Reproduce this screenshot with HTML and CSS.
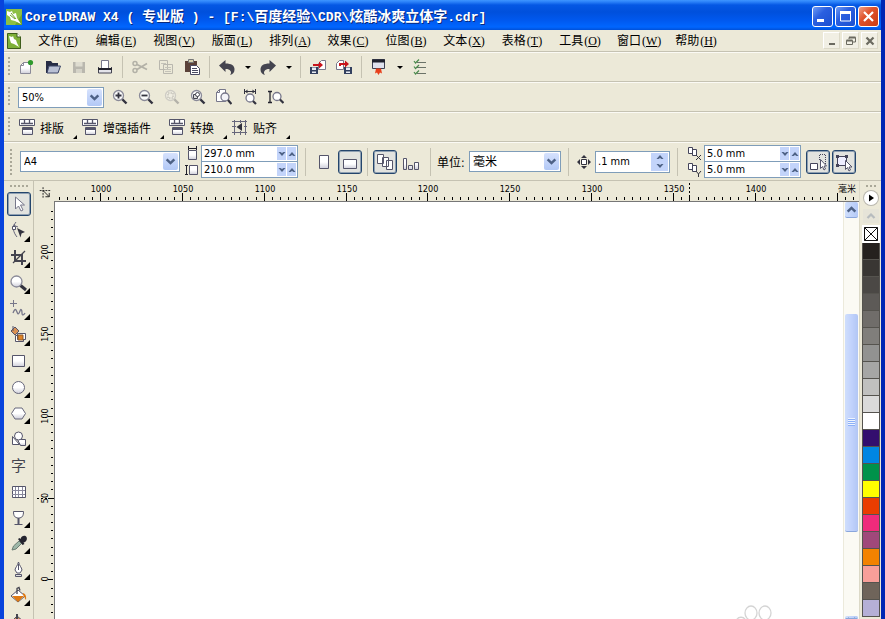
FILE: index.html
```html
<!DOCTYPE html>
<html lang="zh-CN">
<head>
    <meta charset="UTF-8">
    <meta name="viewport" content="width=device-width, initial-scale=1.0">
    <title>CorelDRAW X4</title>
    <link rel="stylesheet" href="styles.css">
</head>
<body>

<!-- shared shapes -->
<svg class="defs" aria-hidden="true">
    <defs>
        <linearGradient id="shade" x1="0" y1="0" x2="0" y2="1">
            <stop offset="0.5" stop-color="#fff"/>
            <stop offset="1" stop-color="#cfcfda"/>
        </linearGradient>
        <symbol id="lens" viewBox="0 0 16 16">
            <path d="M10 10l4.500 4.500" stroke="#33333f" stroke-width="2.400"/>
            <circle cx="6.500" cy="6.500" r="5" fill="#fafafa" stroke="#8a8a98" stroke-width="1.300"/>
        </symbol>
        <symbol id="plugin" viewBox="0 0 16 16">
            <path d="M0.500 0.500h15v6h-15z" fill="#fff" stroke="#55556a"/>
            <path d="M5.500 1v3M10.500 1v3M2 4.500h12" stroke="#55556a" stroke-width="1.300"/>
            <path d="M3.500 8.500h10v7h-10z" fill="url(#shade)" stroke="#55556a"/>
            <path d="M3 10h11" stroke="#55556a" stroke-width="2"/>
        </symbol>
        <symbol id="chevron" viewBox="0 0 10 8">
            <path d="M1.500 2L5 5.500L8.500 2" fill="none" stroke="#4d6185" stroke-width="2.200"/>
        </symbol>
        <symbol id="spin" viewBox="0 0 8 6">
            <path d="M0.500 1h2L4 2l1.500-1h2L4 5z" fill="#4d6185"/>
        </symbol>
        <symbol id="logo" viewBox="0 0 16 16">
            <path d="M0 0h16v16H0z" fill="#6fa52c"/>
            <path d="M0 0h16v5L9 16H0z" fill="#8dbf45"/>
            <path d="M1 2l3 1 2-1 1 3 3-1 1 5 4 6-6-3-4-1-1-3-3-2z" fill="#fff"/>
            <path d="M5 4l5 6M4 6l5 4" stroke="#6fa52c"/>
        </symbol>
    </defs>
</svg>

<header class="title-bar">
    <svg class="app-icon" viewBox="0 0 16 16"><use href="#logo"/></svg>
    <h1><span class="latin">CorelDRAW X4 ( </span>专业版<span class="latin"> ) - [F:\</span>百度经验<span class="latin">\CDR\</span>炫酷冰爽立体字<span class="latin">.cdr]</span></h1>
    <div class="window-buttons">
        <button aria-label="最小化"><svg viewBox="0 0 17 17"><path d="M3 12.500h7" stroke="#fff" stroke-width="3"/></svg></button>
        <button aria-label="最大化"><svg viewBox="0 0 17 17"><path d="M3.500 4h10v9h-10z" fill="none" stroke="#fff"/><path d="M3 4.500h11" stroke="#fff" stroke-width="3"/></svg></button>
        <button class="close" aria-label="关闭"><svg viewBox="0 0 17 17"><path d="M4 4l9 9M13 4l-9 9" stroke="#fff" stroke-width="2.200"/></svg></button>
    </div>
</header>

<nav class="menu-bar">
    <svg class="doc-icon" viewBox="0 0 14 16"><path d="M0.500 0.500h9.500l3.500 3.500v11.500h-13z" fill="#7eb038" stroke="#3f5d1c"/><path d="M10 0v4h4" fill="#fff" stroke="#3f5d1c"/><path d="M2 3l3 1 1-1 1 3 2 1 1 3 2 4-5-3-3-1-1-3z" fill="#fff"/></svg>
    <div class="menus">
        <button>文件<span class="key">(<u>F</u>)</span></button>
        <button>编辑<span class="key">(<u>E</u>)</span></button>
        <button>视图<span class="key">(<u>V</u>)</span></button>
        <button>版面<span class="key">(<u>L</u>)</span></button>
        <button>排列<span class="key">(<u>A</u>)</span></button>
        <button>效果<span class="key">(<u>C</u>)</span></button>
        <button>位图<span class="key">(<u>B</u>)</span></button>
        <button>文本<span class="key">(<u>X</u>)</span></button>
        <button>表格<span class="key">(<u>T</u>)</span></button>
        <button>工具<span class="key">(<u>O</u>)</span></button>
        <button>窗口<span class="key">(<u>W</u>)</span></button>
        <button>帮助<span class="key">(<u>H</u>)</span></button>
    </div>
    <div class="doc-buttons">
        <button aria-label="最小化文档"><svg viewBox="0 0 10 10"><path d="M2 8h6" stroke="#6b6a60" stroke-width="2"/></svg></button>
        <button aria-label="还原文档"><svg viewBox="0 0 10 10"><path d="M3 3V1.500h6.500v4.500H7M0.500 4.500h6v4h-6z" fill="none" stroke="#6b6a60"/><path d="M3 1.500h6.500M0.500 4.500h6" stroke="#6b6a60" stroke-width="2"/></svg></button>
        <button aria-label="关闭文档"><svg viewBox="0 0 10 10"><path d="M1.500 1.500l7 7M8.500 1.500l-7 7" stroke="#6b6a60" stroke-width="2.200"/></svg></button>
    </div>
</nav>

<div class="toolbar standard">
    <span class="grip"></span>
    <button class="tool" aria-label="新建"><svg viewBox="0 0 16 16"><path d="M1.500 6.500l3-3h7v11h-10z" fill="url(#shade)" stroke="#8a8a98"/><path d="M1.500 6.500h3v-3" fill="none" stroke="#8a8a98"/><circle cx="11.500" cy="3.500" r="2.600" fill="#2f9a2c"/></svg></button>
    <button class="tool" aria-label="打开"><svg viewBox="0 0 16 16"><path d="M1 2h5l1.500 2H13v3H4l-1.500 7H1z" fill="#262c45"/><path d="M4 7h11.500l-2.500 7H2z" fill="#b9c0d4" stroke="#3b4567"/></svg></button>
    <button class="tool" aria-label="保存" disabled><svg viewBox="0 0 16 16"><path d="M2 3h12v11H2z" fill="#b9b7ae"/><path d="M4.500 3h7v4.500h-7z" fill="#dedcd0"/><path d="M5 10h6v4H5z" fill="#d5d3c8"/></svg></button>
    <button class="tool" aria-label="打印"><svg viewBox="0 0 16 16"><path d="M4.500 1.500h7v8h-7z" fill="#fff" stroke="#77778a"/><path d="M2 10h12v4H2z" fill="#e4e4ea"/><path d="M1.500 8v6h13V8" fill="none" stroke="#444452"/><path d="M1 10h14" stroke="#22222c" stroke-width="2"/></svg></button>
    <span class="separator"></span>
    <button class="tool" aria-label="剪切" disabled><svg viewBox="0 0 16 16"><path d="M5 5.500l10 5M5 10.500l10-6" stroke="#b3b1a7" stroke-width="1.700"/><circle cx="3" cy="4.500" r="2" fill="none" stroke="#b3b1a7" stroke-width="1.500"/><circle cx="3" cy="11.500" r="2" fill="none" stroke="#b3b1a7" stroke-width="1.500"/></svg></button>
    <button class="tool" aria-label="复制" disabled><svg viewBox="0 0 16 16"><path d="M1.500 1.500h8v9h-8zM5.500 5.500h9v9h-9z" fill="#ece9d8" stroke="#b9b7ae"/><path d="M3 4.500h5M7 8.500h6M7 10.500h6M7 12.500h6" stroke="#c4c2b8"/></svg></button>
    <button class="tool" aria-label="粘贴"><svg viewBox="0 0 16 16"><path d="M1 2h12v11H1z" fill="#5a4138"/><path d="M4.500 0.500h5v3h-5z" fill="#d8d2b0" stroke="#777"/><path d="M6.500 6.500h6l3 3v6h-9z" fill="#fff" stroke="#4a4a62"/><path d="M8 9.500h5M8 11.500h6M8 13.500h6" stroke="#4a4a62"/></svg></button>
    <span class="separator"></span>
    <button class="tool" aria-label="撤消"><svg viewBox="0 0 16 16"><path d="M0 6.500L6.500 1v3.500c6 0 9 2 9 6 0 3-1.500 4.500-4.500 5.500 1-1.500 1.500-2.500 0.500-4s-2.500-2-5-2v3z" fill="#44444f"/></svg></button>
    <button class="drop" aria-label="撤消列表"></button>
    <button class="tool" aria-label="重做"><svg viewBox="0 0 16 16"><path d="M16 6.500L9.500 1v3.500c-6 0-9 2-9 6 0 3 1.500 4.500 4.500 5.500-1-1.500-1.500-2.500-0.500-4s2.500-2 5-2v3z" fill="#44444f"/></svg></button>
    <button class="drop" aria-label="重做列表"></button>
    <span class="separator"></span>
    <button class="tool" aria-label="导入"><svg viewBox="0 0 16 16"><path d="M8.500 4.500l3-3h4v9h-7z" fill="#fff" stroke="#77778a"/><path d="M0 8h8v7H0z" fill="#33405f"/><path d="M2 8.500h4v2.500H2zM2 12.500h4v1.500H2z" fill="#e8ecf4"/><path d="M3 5h6V2.500l4 3.500-4 3.500V7H3z" fill="#c8141c"/></svg></button>
    <button class="tool" aria-label="导出"><svg viewBox="0 0 16 16"><path d="M0.500 4.500l3-3h4v9h-7z" fill="#fff" stroke="#77778a"/><path d="M8 8h8v7H8z" fill="#33405f"/><path d="M10 8.500h4v2.500h-4zM10 12.500h4v1.500h-4z" fill="#e8ecf4"/><path d="M3 7V4h6V1.500L13 5 9 8.500V6H5v1z" fill="#c8141c"/></svg></button>
    <span class="separator"></span>
    <button class="tool" aria-label="应用程序启动器"><svg viewBox="0 0 16 16"><path d="M1.500 0.500h12v9h-12z" fill="#dfe2ee" stroke="#3d4052"/><path d="M1 2h13" stroke="#20222e" stroke-width="3"/><path d="M5 9.500h5l1 5-2-1-1.500 2.500-1.500-2.500-2 1z" fill="#e8401c"/></svg></button>
    <button class="drop" aria-label="应用程序列表"></button>
    <button class="tool" aria-label="选项"><svg viewBox="0 0 16 16"><path d="M5 3.500h9M5 8.500h9M5 14.500h9" stroke="#6b7268"/><path d="M2 2l1.500 2L7 0.500M2 7.500l1.500 2L7 6M2 13l1.500 2L7 11.500" fill="none" stroke="#4a8a4c" stroke-width="1.200"/></svg></button>
</div>

<div class="toolbar zoom-bar">
    <span class="grip"></span>
    <div class="combo zoom-level">
        <select aria-label="缩放级别"><option>50%</option></select>
        <svg><use href="#chevron"/></svg>
    </div>
    <button class="tool" aria-label="放大"><svg viewBox="0 0 16 16"><use href="#lens"/><path d="M3.500 6.500h6M6.500 3.500v6" stroke="#33333f" stroke-width="1.800"/></svg></button>
    <button class="tool" aria-label="缩小"><svg viewBox="0 0 16 16"><use href="#lens"/><path d="M3.500 6.500h6" stroke="#33333f" stroke-width="1.800"/></svg></button>
    <button class="tool faded" aria-label="缩放选定范围" disabled><svg viewBox="0 0 16 16"><use href="#lens"/><path d="M4 4h5v5H4z" fill="none" stroke="#33333f" stroke-dasharray="1.500 1"/></svg></button>
    <button class="tool" aria-label="缩放全部对象"><svg viewBox="0 0 16 16"><use href="#lens"/><path d="M3.500 5.500h4v4h-4z" fill="#ddd" stroke="#44444f"/><circle cx="7.500" cy="5.500" r="2" fill="#fff" stroke="#44444f"/></svg></button>
    <button class="tool" aria-label="显示页面"><svg viewBox="0 0 16 16"><path d="M0.500 3.500l3-3h6v12h-9z" fill="#fff" stroke="#77778a"/><path d="M0.500 3.500h3v-3" fill="none" stroke="#77778a"/><circle cx="9" cy="8" r="4" fill="#f4f4f8" stroke="#77778a" stroke-width="1.300"/><path d="M12 11l3.500 4" stroke="#33333f" stroke-width="2.200"/></svg></button>
    <button class="tool" aria-label="按页宽显示"><svg viewBox="0 0 16 16"><path d="M2.500 0v5M13.500 0v5M3 2.500h10" stroke="#33333f"/><path d="M5.500 0.500L3 2.500l2.500 2M10.500 0.500l2.500 2-2.500 2" fill="#33333f"/><circle cx="8" cy="9" r="4" fill="#fff" stroke="#77778a" stroke-width="1.300"/><path d="M11 12l3 3" stroke="#33333f" stroke-width="2.200"/></svg></button>
    <button class="tool" aria-label="按页高显示"><svg viewBox="0 0 16 16"><path d="M0 2.500h4M0 13.500h4M2 3v10" stroke="#22222c" stroke-width="1.300"/><circle cx="9" cy="7.500" r="4" fill="#fff" stroke="#77778a" stroke-width="1.300"/><path d="M12 10.500l3.500 3.500" stroke="#33333f" stroke-width="2.200"/></svg></button>
</div>

<div class="toolbar plugin-bar">
    <span class="grip"></span>
    <button class="plugin"><svg viewBox="0 0 16 16"><use href="#plugin"/></svg>排版</button>
    <button class="plugin"><svg viewBox="0 0 16 16"><use href="#plugin"/></svg>增强插件</button>
    <button class="plugin"><svg viewBox="0 0 16 16"><use href="#plugin"/></svg>转换</button>
    <button class="plugin"><svg viewBox="0 0 16 16"><path d="M0 2.500h15M0 7.500h4M12 7.500h3M0 13.500h15M2.500 1v15M8.500 1v3M8.500 12v4M13.500 1v15" stroke="#66667a"/><path d="M10 4v8L4.500 8z" fill="#33333f"/></svg>贴齐</button>
</div>

<div class="toolbar property-bar">
    <span class="grip"></span>
    <div class="combo paper">
        <select aria-label="纸张类型"><option>A4</option></select>
        <svg><use href="#chevron"/></svg>
    </div>
    <div class="pair-icons">
        <svg viewBox="0 0 14 16"><path d="M3 2.500h8M3.500 0v4M11.500 0v4" stroke="#22222c"/><path d="M3.500 4.500h8v9h-8z" fill="url(#shade)" stroke="#55556a"/></svg>
        <svg viewBox="0 0 14 16"><path d="M1.500 3v10M0 3.500h3M0 12.500h3" stroke="#22222c"/><path d="M4.500 3.500h8v9h-8z" fill="url(#shade)" stroke="#55556a"/></svg>
    </div>
    <div class="pair">
        <div class="field">
            <input type="text" value="297.0 mm" aria-label="纸张宽度">
            <button aria-label="减小宽度"><svg><use href="#spin"/></svg></button>
            <button class="up" aria-label="增大宽度"><svg><use href="#spin"/></svg></button>
        </div>
        <div class="field">
            <input type="text" value="210.0 mm" aria-label="纸张高度">
            <button aria-label="减小高度"><svg><use href="#spin"/></svg></button>
            <button class="up" aria-label="增大高度"><svg><use href="#spin"/></svg></button>
        </div>
    </div>
    <span class="separator"></span>
    <button class="option" aria-label="纵向"><svg viewBox="0 0 20 20"><path d="M5.500 3.500h9v13h-9z" fill="url(#shade)" stroke="#55556a"/></svg></button>
    <button class="option pressed" aria-label="横向"><svg viewBox="0 0 20 20"><path d="M3.500 7.500h13v9h-13z" fill="url(#shade)" stroke="#55556a"/></svg></button>
    <span class="separator narrow"></span>
    <button class="option pressed" aria-label="所有页面"><svg viewBox="0 0 20 20"><path d="M2.500 2.500h6v9h-6zM7.500 5.500h6v9h-6zM11.500 8.500h6v9h-6z" fill="#fff" stroke="#55556a"/></svg></button>
    <button class="option" aria-label="当前页面"><svg viewBox="0 0 20 20"><path d="M2.500 6.500h3v11h-3zM7.500 13.500h4v4h-4zM13.500 10.500h4v7h-4z" fill="url(#shade)" stroke="#55556a"/></svg></button>
    <span class="separator"></span>
    <label for="unit">单位:</label>
    <div class="combo unit">
        <select id="unit"><option>毫米</option></select>
        <svg><use href="#chevron"/></svg>
    </div>
    <span class="separator"></span>
    <svg class="nudge-icon" viewBox="0 0 18 18"><path d="M6.500 6.500h5v5h-5z" fill="#fff" stroke="#33333f"/><path d="M9 2l3 3H6zM9 16l3-3H6zM2 9l3-3v6zM16 9l-3-3v6z" fill="#33333f"/></svg>
    <div class="field nudge">
        <input type="text" value=".1 mm" aria-label="微调偏移">
        <div class="arrows">
            <button class="up" aria-label="增大偏移"><svg><use href="#spin"/></svg></button>
            <button aria-label="减小偏移"><svg><use href="#spin"/></svg></button>
        </div>
    </div>
    <span class="separator"></span>
    <div class="pair-icons wide">
        <svg viewBox="0 0 16 16"><path d="M2.500 1.500h4v6h-4zM6.500 3.500h4v6h-4z" fill="#fff" stroke="#44445a"/><path d="M10 9l5 5M15 9l-5 5" stroke="#33333f"/></svg>
        <svg viewBox="0 0 16 16"><path d="M2.500 1.500h4v6h-4zM6.500 3.500h4v6h-4z" fill="#fff" stroke="#44445a"/><path d="M10 9l2.500 3L15 9M12.500 12v3" fill="none" stroke="#33333f"/></svg>
    </div>
    <div class="pair">
        <div class="field">
            <input type="text" value="5.0 mm" aria-label="再制距离 X">
            <button aria-label="减小 X"><svg><use href="#spin"/></svg></button>
            <button class="up" aria-label="增大 X"><svg><use href="#spin"/></svg></button>
        </div>
        <div class="field">
            <input type="text" value="5.0 mm" aria-label="再制距离 Y">
            <button aria-label="减小 Y"><svg><use href="#spin"/></svg></button>
            <button class="up" aria-label="增大 Y"><svg><use href="#spin"/></svg></button>
        </div>
    </div>
    <div class="toggles">
        <button class="option pressed" aria-label="绘制复杂对象"><svg viewBox="0 0 20 20"><path d="M2.500 11.500h7v6h-7z" fill="#fff" stroke="#44445a"/><path d="M11.500 8V2.500h6v10" fill="none" stroke="#44445a" stroke-dasharray="1 1"/><path d="M12.500 7.500v9l2-2 1.500 3.500 1.500-1-1.500-3h2.500z" fill="#fff" stroke="#55556a"/></svg></button>
        <button class="option pressed" aria-label="视为已填充"><svg viewBox="0 0 20 20"><path d="M3.500 4.500h9v9h-9z" fill="#eef" stroke="#44445a"/><path d="M2 3h3v3H2zM11 3h3v3h-3zM2 12h3v3H2z" fill="#44445a"/><path d="M11.500 8.500v9l2-2 1.500 3.500 1.500-1-1.500-3h3z" fill="#fff" stroke="#55556a"/></svg></button>
    </div>
</div>

<main class="workspace">
    <aside class="toolbox">
        <span class="grip-row"></span>
        <button class="option pressed" aria-label="挑选"><svg viewBox="0 0 20 20"><path d="M6.500 3v12l3-3 2.500 5 2-1-2.500-5h4z" fill="#fff" stroke="#77778a"/></svg></button>
        <button class="option more" aria-label="形状"><svg viewBox="0 0 20 20"><path d="M7 0c-4 5-3 10 1 15M4 3l5 2" fill="none" stroke="#66667a"/><path d="M3.500 4.500h3v3h-3z" fill="#fff" stroke="#55556a"/><path d="M8 6l8 4-3.500 1.500-1 4z" fill="#33333f"/></svg></button>
        <button class="option more" aria-label="裁剪"><svg viewBox="0 0 20 20"><path d="M6 2v11h11M2 7h11v10" fill="none" stroke="#44444f" stroke-width="2"/><path d="M16 3L4 15" stroke="#44444f" stroke-width="1.300"/></svg></button>
        <button class="option more" aria-label="缩放"><svg viewBox="0 0 20 20"><path d="M11 11l6 5" stroke="#33333f" stroke-width="3"/><circle cx="7.500" cy="7.500" r="5.500" fill="url(#shade)" stroke="#8a8a98" stroke-width="1.300"/></svg></button>
        <button class="option more" aria-label="手绘"><svg viewBox="0 0 20 20"><path d="M4.500 0v7M1 3.500h7" stroke="#77778a"/><path d="M4 13c2-5 3-4 4-1s2 2 3-1 2-1 2 2 2 2 3 0" fill="none" stroke="#77778a" stroke-width="1.300"/></svg></button>
        <button class="option more" aria-label="智能填充"><svg viewBox="0 0 20 20"><path d="M2 5l4-4 4 4-4 4z" fill="#d99052" stroke="#55556a"/><path d="M4 0v5" stroke="#55556a"/><path d="M6.500 9.500h8v6h-8z" fill="#fff" stroke="#55556a"/><path d="M8.500 7.500h8v6h-8z" fill="#fff" stroke="#55556a"/><path d="M9 9h5v5H9z" fill="#e08324" stroke="#8a5a2c"/></svg></button>
        <button class="option more" aria-label="矩形"><svg viewBox="0 0 20 20"><path d="M3.500 3.500h12v11h-12z" fill="url(#shade)" stroke="#55556a"/></svg></button>
        <button class="option more" aria-label="椭圆形"><svg viewBox="0 0 20 20"><circle cx="9.500" cy="9.500" r="6" fill="url(#shade)" stroke="#66667a"/></svg></button>
        <button class="option more" aria-label="多边形"><svg viewBox="0 0 20 20"><path d="M2.500 9.500l3.500-5.500h7l3.500 5.500-3.500 5.500H6z" fill="url(#shade)" stroke="#66667a"/></svg></button>
        <button class="option more" aria-label="基本形状"><svg viewBox="0 0 20 20"><path d="M3.500 6.500v8h7z" fill="#fff" stroke="#55556a"/><path d="M8.500 9.500h8v6h-5z" fill="url(#shade)" stroke="#55556a"/><circle cx="9.500" cy="6" r="4" fill="#fff" stroke="#55556a"/></svg></button>
        <button class="option" aria-label="文本"><span class="glyph">字</span></button>
        <button class="option" aria-label="表格"><svg viewBox="0 0 20 20"><path d="M3.500 4.500h13v11h-13z" fill="#fff" stroke="#55556a"/><path d="M3 8.500h13M3 12.500h13M6.500 5v10M9.500 5v10M13.500 5v10" stroke="#88889c"/></svg></button>
        <button class="option more" aria-label="交互式调和"><svg viewBox="0 0 20 20"><path d="M4.500 3.500h10c0 4-1 6.500-5 6.500s-5-2.500-5-6.500z" fill="#fff" stroke="#55556a"/><path d="M9.500 10v6" stroke="#55556a" stroke-width="2"/><path d="M5.500 16.500h8" stroke="#55556a"/></svg></button>
        <button class="option more" aria-label="滴管"><svg viewBox="0 0 20 20"><path d="M3 16l1.500-4L10 7l2.500 2.500L7 15z" fill="#9eb8a8" stroke="#6b7d72"/><path d="M9 5l1.500-1 1 1c1-4 5-4 6-2s0 5-3 5.500l1 1.500-2 1z" fill="#24242f"/></svg></button>
        <button class="option more" aria-label="轮廓"><svg viewBox="0 0 20 20"><path d="M9.500 2c-1 4-3 5-3.500 8l2 3h3l2-3c-0.500-3-2.500-4-3.500-8z" fill="#fff" stroke="#55556a"/><path d="M9.500 4v6" stroke="#55556a"/><path d="M6.500 14.500h6v2h-6z" fill="#ddd" stroke="#55556a"/></svg></button>
        <button class="option more" aria-label="填充"><svg viewBox="0 0 20 20"><path d="M2 10l7-6 7 6-7 6z" fill="#fff" stroke="#55556a"/><path d="M3 10h12l-6 6z" fill="#e07a12"/><path d="M14 7c3 1 3.500 4 3 7-2-2-1-4-3-5z" fill="#e07a12"/><path d="M8 8V2.500l2-1 1 3" fill="none" stroke="#44444f" stroke-width="1.300"/></svg></button>
        <button class="option more" aria-label="交互式填充"><svg viewBox="0 0 20 20"><path d="M3 9l5-5 6 5-5 5z" fill="#d99052" stroke="#55556a"/><path d="M8 7V2" stroke="#44444f" stroke-width="2"/></svg></button>
    </aside>

    <section class="document">
        <svg class="corner" viewBox="0 0 21 21"><path d="M6 9.500h12M9.500 6v12" stroke="#222" stroke-dasharray="2 1"/><path d="M10 10l6 6M16 12v4h-4" fill="none" stroke="#222"/></svg>
        <div class="ruler-top">
            <svg id="rulerTop"></svg>
            <span>毫米</span>
        </div>
        <svg id="rulerLeft" class="ruler-left"></svg>
        <div class="page">
            <svg class="paw" viewBox="0 0 46 16"><g fill="none" stroke="#d4d4d4" stroke-width="1.300"><ellipse cx="18" cy="8" rx="6" ry="7"/><ellipse cx="32" cy="8" rx="6" ry="7"/><path d="M3 16c2-5 8-5 10 0"/></g></svg>
        </div>
        <div class="scrollbar">
            <button aria-label="向上滚动"><svg class="flip"><use href="#chevron"/></svg></button>
            <div class="track above"></div>
            <div class="thumb"><i></i></div>
            <div class="track below"></div>
            <button class="last" aria-label="向下滚动"><svg><use href="#chevron"/></svg></button>
        </div>
    </section>

    <aside class="palette">
        <span class="grip-row"></span>
        <button class="flyout" aria-label="调色板菜单"><svg viewBox="0 0 14 14"><path d="M5 3.500v7L10 7z" fill="#000"/></svg></button>
        <button class="scroll-up" aria-label="向上滚动调色板" disabled><svg class="flip"><use href="#chevron"/></svg></button>
        <button class="none" aria-label="无填充"><svg viewBox="0 0 18 16"><path d="M2.500 1.500h13v13h-13zM2.500 1.500l13 13M15.500 1.500l-13 13" fill="#fff" stroke="#111"/></svg></button>
        <div id="swatches" class="swatches"></div>
    </aside>
</main>

<script>
const SVG = "http://www.w3.org/2000/svg";
const pxPerMm = 1.637; // 50% zoom
const colors = [
    "#25211e", "#393633", "#4b4845", "#5d5a57", "#706d6a", "#807e7b",
    "#929291", "#a6a6a5", "#c0c0bf", "#dadada", "#ffffff", "#330e6e",
    "#0086e2", "#00924a", "#ffff00", "#ea3d00", "#ef2b7b", "#a0487a",
    "#f38200", "#f89f99", "#6f645a", "#b5afd6"
];

function add(parent, name, attrs, text) {
    const el = document.createElementNS(SVG, name);
    for (const key in attrs) el.setAttribute(key, attrs[key]);
    if (text !== undefined) el.textContent = text;
    parent.appendChild(el);
}

function drawTop() {
    const ruler = document.getElementById("rulerTop");
    ruler.innerHTML = "";
    const width = ruler.clientWidth;
    for (let mm = 975; ; mm += 5) {
        const x = Math.round(46 + (mm - 1000) * pxPerMm);
        if (x > width - 5) break;
        const major = mm % 50 === 0;
        add(ruler, "rect", {x: x, y: major ? 12 : 16, width: 1, height: major ? 8 : 3});
        if (major && x < width - 40) add(ruler, "text", {x: x + 1, y: 11, "text-anchor": "middle"}, mm);
    }
    // mouse position
    add(ruler, "path", {d: "M635.5 2v19", class: "marker"});
}

function drawLeft() {
    const ruler = document.getElementById("rulerLeft");
    ruler.innerHTML = "";
    const height = ruler.clientHeight;
    for (let mm = 225; ; mm -= 5) {
        const y = Math.round(50 + (200 - mm) * pxPerMm);
        if (y > height) break;
        const major = mm % 50 === 0;
        add(ruler, "rect", {x: major ? 14 : 17, y: y, width: major ? 5 : 2, height: 1});
        if (major) add(ruler, "text", {x: -y, y: 14, "text-anchor": "middle", transform: "rotate(-90)"}, mm);
    }
    add(ruler, "path", {d: "M3 296.5h17", class: "marker"});
}

colors.forEach(color => {
    const swatch = document.createElement("button");
    swatch.style.background = color;
    swatch.setAttribute("aria-label", color);
    document.getElementById("swatches").appendChild(swatch);
});

function drawRulers() {
    drawTop();
    drawLeft();
}

window.addEventListener("resize", drawRulers);
drawRulers();
</script>

</body>
</html>
```
FILE: styles.css
```css
* {
    box-sizing: border-box;
}

body {
    margin: 0;
    height: 100vh;
    overflow: hidden;
    display: flex;
    flex-direction: column;
    border-left: 4px solid #0843dc;
    border-right: 4px solid #0026b4;
    background: #ece9d8;
    color: #000;
    font-family: "DejaVu Sans Condensed", "Noto Sans CJK SC", sans-serif;
    font-size: 12px;
}

button {
    font: inherit;
    color: inherit;
    padding: 0;
    margin: 0;
    border: none;
    background: none;
}

svg {
    display: block;
    flex: none;
}

.defs {
    position: absolute;
    width: 0;
    height: 0;
}

/* Title bar */
.title-bar {
    flex: none;
    display: flex;
    align-items: center;
    gap: 3px;
    height: 30px;
    padding: 3px 6px 0;
    margin: 0 -4px;
    background: linear-gradient(#3f96ff 0, #2a80f8 2px, #0558e4 5px, #0050dc 12px, #0058ee 20px, #0066ff 27px, #0050d8 30px);
}

.app-icon {
    width: 16px;
    height: 16px;
}

.title-bar h1 {
    flex: 1;
    margin: 0;
    font-family: "Noto Sans CJK SC", sans-serif;
    font-size: 14px;
    font-weight: bold;
    line-height: 20px;
    color: #fff;
    white-space: pre;
    text-shadow: 1px 1px 0 #0a2a7c;
}

.latin {
    font-family: "Liberation Mono", monospace;
    font-size: 13px;
}

.window-buttons {
    display: flex;
    gap: 2px;
}

.window-buttons button {
    width: 21px;
    height: 21px;
    padding: 1px;
    border: 1px solid #fff;
    border-radius: 3px;
    background: linear-gradient(135deg, #6f9cf5, #2a5fe0 40%, #1c4fd0);
}

.window-buttons .close {
    background: linear-gradient(135deg, #f0a088, #e0532c 40%, #c83c14);
}

/* Menu */
.menu-bar {
    flex: none;
    display: flex;
    align-items: center;
    height: 22px;
    padding: 0 3px;
    border-bottom: 1px solid #c5c2b2;
}

.doc-icon {
    width: 14px;
    height: 16px;
}

.menus {
    flex: 1;
    display: flex;
    gap: 16px;
    padding-left: 16px;
}

.menus button {
    width: 42px;
    line-height: 20px;
    white-space: nowrap;
}

.key {
    font-family: "Liberation Serif", serif;
    font-size: 12px;
    padding-left: 1px;
}

.doc-buttons {
    display: flex;
    gap: 2px;
}

.doc-buttons button {
    width: 17px;
    height: 17px;
    display: grid;
    place-items: center;
    background: #f1efe4;
    border: 1px solid;
    border-color: #fff #dcd9c8 #dcd9c8 #fff;
}

.doc-buttons svg {
    width: 10px;
    height: 10px;
}

/* Toolbars */
.toolbar {
    flex: none;
    display: flex;
    align-items: center;
    height: 30px;
    border-top: 1px solid #fbfaf4;
    border-bottom: 1px solid #c5c2b2;
}

.grip {
    width: 2px;
    height: 20px;
    margin: 0 4px;
    background: repeating-linear-gradient(#aaa898 0 2px, transparent 2px 4px);
}

.grip-row {
    width: 18px;
    height: 2px;
    background: repeating-linear-gradient(90deg, #aaa898 0 2px, transparent 2px 4px);
}

.tool {
    width: 26px;
    height: 26px;
    display: grid;
    place-items: center;
}

.tool svg {
    width: 16px;
    height: 16px;
}

.faded {
    opacity: 0.3;
}

.separator {
    width: 9px;
    height: 22px;
    background: linear-gradient(#c5c2b2, #c5c2b2) center / 1px 100% no-repeat;
}

.drop {
    width: 15px;
    height: 26px;
    display: grid;
    place-items: center;
}

.drop::before {
    content: "";
    border: 3px solid transparent;
    border-top-color: #000;
    border-bottom: none;
}

/* Combo boxes */
.combo {
    display: grid;
    height: 21px;
}

.combo select,
.combo svg {
    grid-area: 1 / 1;
}

.combo select {
    width: 100%;
    appearance: none;
    border: 1px solid #7f9db9;
    border-radius: 0;
    background: #fff;
    padding: 0 18px 0 3px;
    margin: 0;
    font: inherit;
    font-size: 11px;
    color: #000;
}

.combo svg {
    justify-self: end;
    align-self: center;
    width: 15px;
    height: 17px;
    padding: 4px 2px;
    margin-right: 2px;
    border-radius: 2px;
    background: linear-gradient(#d6e2fd, #b2c8f6);
    pointer-events: none;
}

.zoom-level {
    width: 86px;
    margin: 0 3px 0 4px;
}

/* Plugin bar */
.plugin-bar {
    align-items: stretch;
}

.plugin-bar .grip {
    align-self: center;
    margin-right: 9px;
}

.plugin {
    position: relative;
    display: flex;
    align-items: center;
    gap: 5px;
    padding-right: 18px;
}

.plugin svg {
    width: 16px;
    height: 16px;
}

.plugin::after,
.more::after {
    content: "";
    position: absolute;
    right: 5px;
    bottom: 2px;
    border: 2px solid #000;
    border-top-color: transparent;
    border-left-color: transparent;
}

/* Property bar */
.property-bar {
    height: 39px;
    gap: 2px;
}

.property-bar .grip {
    height: 26px;
    margin: 0 6px;
}

.property-bar .separator {
    width: 10px;
    height: 28px;
}

.property-bar .narrow {
    width: 7px;
}

.property-bar label {
    width: 30px;
}

.paper {
    width: 160px;
}

.unit {
    width: 92px;
}

.unit select {
    font-size: 12px;
}

.pair-icons svg {
    width: 14px;
    height: 16px;
}

.pair-icons {
    margin-left: 3px;
}

.pair-icons.wide svg {
    width: 16px;
}

.pair-icons.wide {
    margin-left: 2px;
}

.pair {
    width: 97px;
}

.field {
    display: flex;
    align-items: center;
    gap: 1px;
    height: 17px;
    padding-right: 1px;
    border: 1px solid #7f9db9;
    background: #fff;
}

.field + .field {
    margin-top: -1px;
}

.field input {
    flex: 1;
    min-width: 0;
    border: none;
    padding: 0 0 0 2px;
    background: none;
    font: inherit;
    font-size: 11px;
    line-height: 15px;
}

.field button {
    width: 9px;
    height: 13px;
    display: grid;
    place-items: center;
    background: #c3d4fa;
}

.field svg {
    width: 8px;
    height: 6px;
}

.up svg,
.flip {
    transform: rotate(180deg);
}

.nudge {
    width: 75px;
    height: 22px;
}

.nudge button {
    width: 17px;
    height: 9px;
}

.nudge-icon {
    width: 18px;
    height: 18px;
}

.toggles {
    display: flex;
    gap: 2px;
    margin-left: 3px;
}

.option {
    position: relative;
    flex: none;
    width: 24px;
    height: 24px;
    display: grid;
    place-items: center;
    border: 1px solid transparent;
    border-radius: 3px;
}

.option svg {
    width: 20px;
    height: 20px;
}

.pressed {
    border-color: #24456c;
    box-shadow: inset 0 0 0 1px #8fa0b2;
    background: #e2e3df;
}

/* Workspace */
.workspace {
    flex: 1;
    min-height: 0;
    display: flex;
}

.toolbox {
    flex: none;
    width: 30px;
    display: flex;
    flex-direction: column;
    align-items: center;
    gap: 2px;
    padding-top: 4px;
    border-right: 1px solid #c5c2b2;
    overflow: hidden;
}

.toolbox .grip-row {
    flex: none;
    margin-bottom: 3px;
}

.toolbox .pressed {
    margin-bottom: 2px;
}

.more::after {
    right: 0;
    bottom: 1px;
    border-width: 3px;
}

.glyph {
    font-size: 15px;
    line-height: 20px;
    color: #44444f;
}

.document {
    flex: 1;
    min-width: 0;
    display: grid;
    grid-template: 21px minmax(0, 1fr) / 20px minmax(0, 1fr) 16px;
    border-right: 1px solid #dcd9c8;
}

.corner {
    width: 20px;
    height: 21px;
}

.ruler-top {
    grid-column: 2 / 4;
    position: relative;
    border-bottom: 1px solid #777;
}

.ruler-top svg {
    width: 100%;
    height: 20px;
}

.ruler-top span {
    position: absolute;
    top: 2px;
    right: 3px;
    font-size: 9px;
    line-height: 12px;
}

.ruler-left {
    width: 20px;
    height: 100%;
}

.document text {
    font-size: 9px;
}

.marker {
    stroke: #000;
    stroke-dasharray: 2 2;
}

.page {
    position: relative;
    background: #fff;
    border-left: 1px solid #777;
}

.paw {
    position: absolute;
    right: 64px;
    bottom: -2px;
    width: 46px;
    height: 16px;
}

.scrollbar {
    display: flex;
    flex-direction: column;
    padding: 0 1px;
    background: #fbfaf4;
    border-left: 1px solid #eceadc;
}

.scrollbar button {
    flex: none;
    height: 16px;
    display: grid;
    place-items: center;
    border-radius: 2px;
    background: linear-gradient(90deg, #d0dffc, #b4c9f7);
    border-bottom: 1px solid #8aa6dc;
}

.scrollbar .last {
    height: 3px;
    overflow: hidden;
}

.scrollbar button svg {
    width: 11px;
    height: 9px;
}

.above {
    flex: 96;
}

.below {
    flex: 84;
}

.thumb {
    flex: 218;
    display: grid;
    place-items: center;
    border-radius: 2px;
    background: linear-gradient(90deg, #cfdefc, #c1d2fc 50%, #b2c6f4);
    border-bottom: 1px solid #8aa6dc;
}

.thumb i {
    width: 7px;
    height: 8px;
    background: repeating-linear-gradient(#eef4fe 0 1px, #8cb0f8 1px 2px);
}

/* Colour palette */
.palette {
    flex: none;
    width: 21px;
    display: flex;
    flex-direction: column;
    align-items: center;
    padding-top: 4px;
}

.palette .grip-row {
    flex: none;
    width: 10px;
}

.flyout {
    width: 14px;
    height: 14px;
    margin: 4px 0;
    border-radius: 50%;
    background: #fff;
    box-shadow: 0 0 0 1px #b9b7ae;
}

.scroll-up {
    width: 16px;
    height: 14px;
    display: grid;
    place-items: center;
    background: #e6e4d8;
}

.scroll-up svg {
    width: 10px;
    height: 8px;
    opacity: 0.3;
}

.none {
    width: 18px;
    margin-top: 2px;
    padding: 1px 0;
    background: #fff;
}

.none svg {
    width: 18px;
    height: 16px;
}

.swatches {
    width: 18px;
    display: flex;
    flex-direction: column;
}

.swatches button {
    flex: none;
    height: 17px;
    border: 1px solid #55534e;
    border-top: none;
}
```
